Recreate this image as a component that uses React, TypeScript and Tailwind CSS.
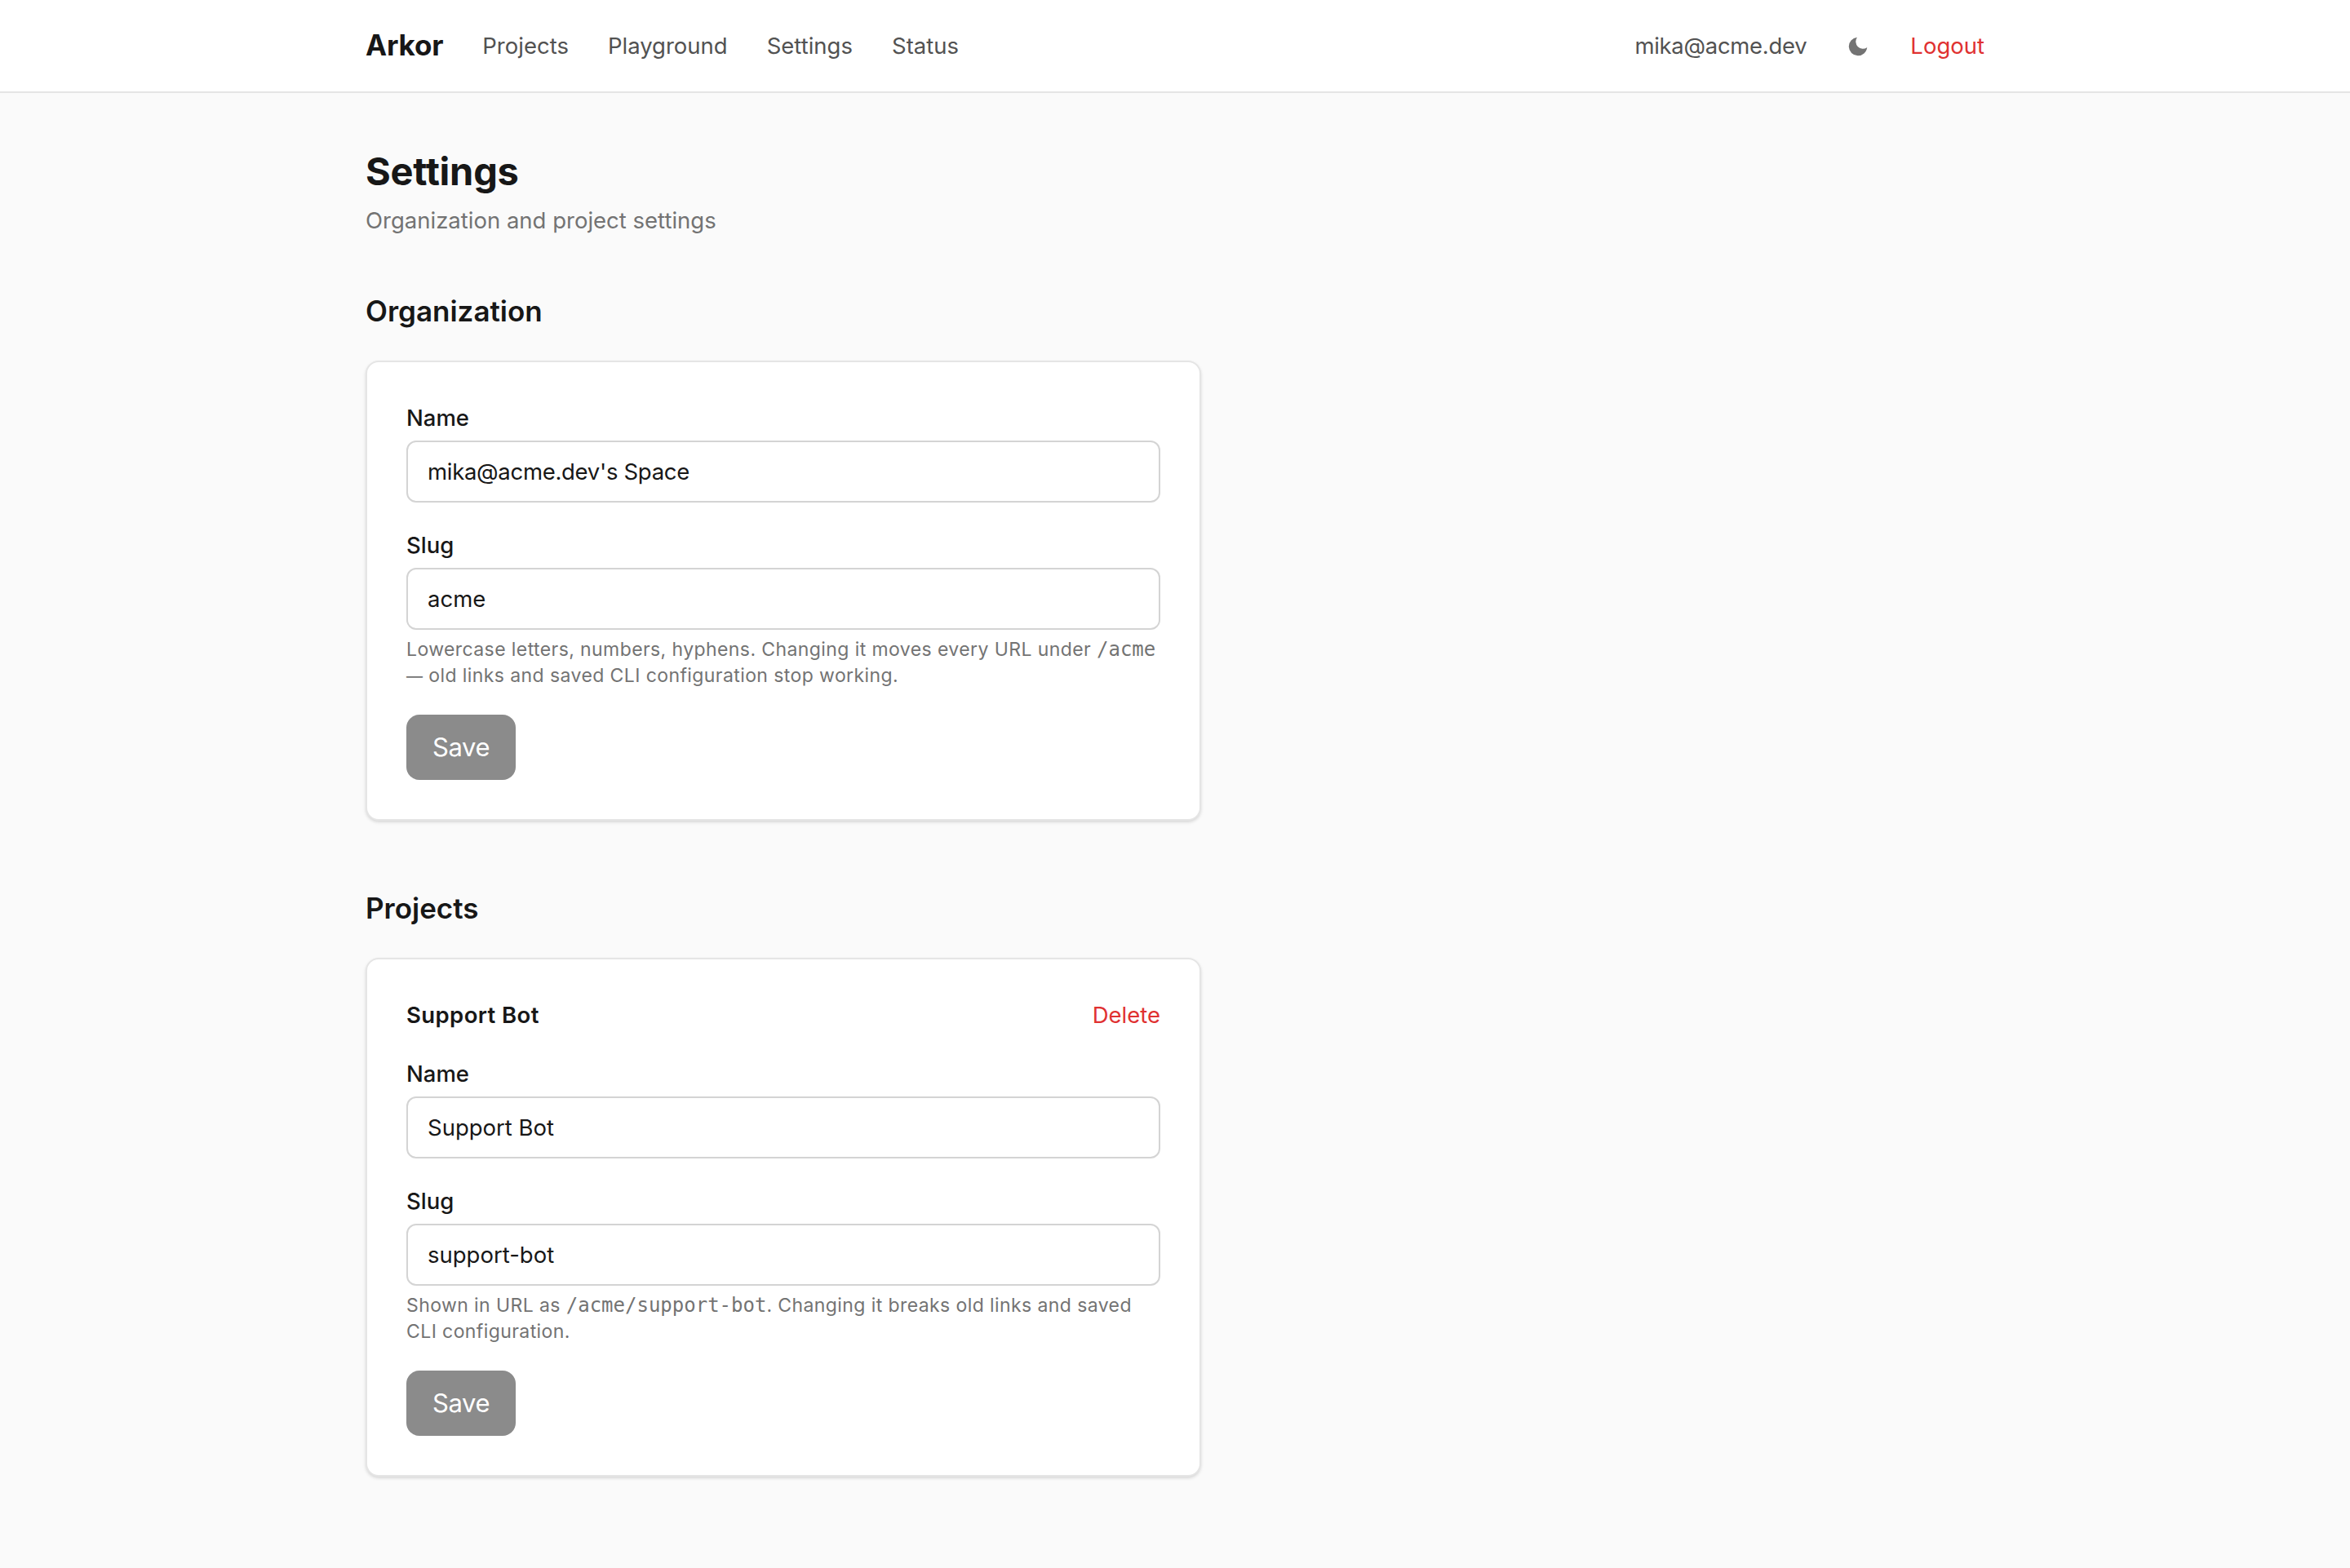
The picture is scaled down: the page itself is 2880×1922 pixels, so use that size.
import type { ReactNode } from 'react';

type FieldProps = {
  label: string;
  value: string;
  hint?: ReactNode;
};

const navLinks = ['Projects', 'Playground', 'Settings', 'Status'];

function MoonIcon() {
  return (
    <svg className="w-[30px] h-[30px]" fill="currentColor" viewBox="0 0 24 24">
      <path d="M21 12.79A9 9 0 1 1 11.21 3 7 7 0 0 0 21 12.79z" />
    </svg>
  );
}

function Header() {
  return (
    <header className="bg-white border-b-2 border-[#e5e5e5]">
      <div className="max-w-[2048px] h-28 mx-auto px-8 flex items-center justify-between">
        <nav className="flex items-center gap-12 text-[27.5px] leading-10 text-[#525252]">
          <a className="mb-0.5 text-[35px] font-bold tracking-[-0.005em] text-[#171717]">Arkor</a>
          {navLinks.map((link) => (
            <a key={link}>{link}</a>
          ))}
        </nav>
        <div className="flex items-center gap-12 text-[27.5px] leading-10">
          <span className="tracking-[-0.3px] text-[#525252]">mika@acme.dev</span>
          <button className="mt-0.5 mr-px text-[#737373]">
            <MoonIcon />
          </button>
          <button className="text-[#e03131]">Logout</button>
        </div>
      </div>
    </header>
  );
}

function Field({ label, value, hint }: FieldProps) {
  return (
    <div>
      <label className="block mb-2 text-[27.5px] leading-10 font-medium">{label}</label>
      <input
        className={`block w-full h-[76px] px-6 border-2 border-[#d4d4d4] rounded-xl bg-white text-[27.5px] outline-none ${value.includes('@') ? 'tracking-[-0.3px]' : 'tracking-normal'}`}
        defaultValue={value}
      />
      {hint && <p className="mt-2 text-[23px] leading-8 tracking-[0.41px] text-[#737373]">{hint}</p>}
    </div>
  );
}

function Card({ children }: { children: ReactNode }) {
  return (
    <div className="w-[1024px] mt-[34px] p-12 flex flex-col gap-8 bg-white border-2 border-[#e5e5e5] rounded-2xl shadow-[0_2px_4px_0_rgba(0,0,0,0.1),0_2px_4px_-2px_rgba(0,0,0,0.1)]">
      {children}
    </div>
  );
}

function SaveButton() {
  return (
    <button className="self-start w-[134px] h-20 pt-px rounded-2xl bg-[#8b8b8b] text-[31px] tracking-[-0.4px] text-white">
      Save
    </button>
  );
}

export default function App() {
  return (
    <div className="min-h-[1922px] bg-[#fafafa] text-[#171717] font-['Inter',sans-serif] antialiased">
      <Header />
      <main className="max-w-[2048px] mx-auto px-8 pt-16">
        <h1 className="text-[47px] leading-[64px] font-bold tracking-[-0.005em]">Settings</h1>
        <p className="mt-2 text-[27.5px] leading-10 text-[#737373]">Organization and project settings</p>

        {/* Organization */}
        <section className="mt-16">
          <h2 className="text-[35px] leading-[54px] font-semibold">Organization</h2>
          <Card>
            <Field label="Name" value="mika@acme.dev's Space" />
            <Field
              label="Slug"
              value="acme"
              hint={
                <>
                  Lowercase letters, numbers, hyphens. Changing it moves every URL under{' '}
                  <code className="font-['DejaVu_Sans_Mono',monospace] text-[24px] leading-none tracking-normal">/acme</code>
                  <br />
                  <span className="text-[20px] leading-none">—</span> old links and saved CLI configuration stop working.
                </>
              }
            />
            <SaveButton />
          </Card>
        </section>

        {/* Projects */}
        <section className="mt-20">
          <h2 className="text-[35px] leading-[54px] font-semibold">Projects</h2>
          <Card>
            <div className="flex items-center justify-between text-[27.5px] leading-10">
              <h3 className="font-semibold tracking-[0.4px]">Support Bot</h3>
              <button className="text-[#e03131]">Delete</button>
            </div>
            <Field label="Name" value="Support Bot" />
            <Field
              label="Slug"
              value="support-bot"
              hint={
                <>
                  Shown in URL as{' '}
                  <code className="font-['DejaVu_Sans_Mono',monospace] text-[24px] leading-none tracking-normal">/acme/support-bot</code>
                  . Changing it breaks old links and saved
                  <br />
                  CLI configuration.
                </>
              }
            />
            <SaveButton />
          </Card>
        </section>
      </main>
    </div>
  );
}
